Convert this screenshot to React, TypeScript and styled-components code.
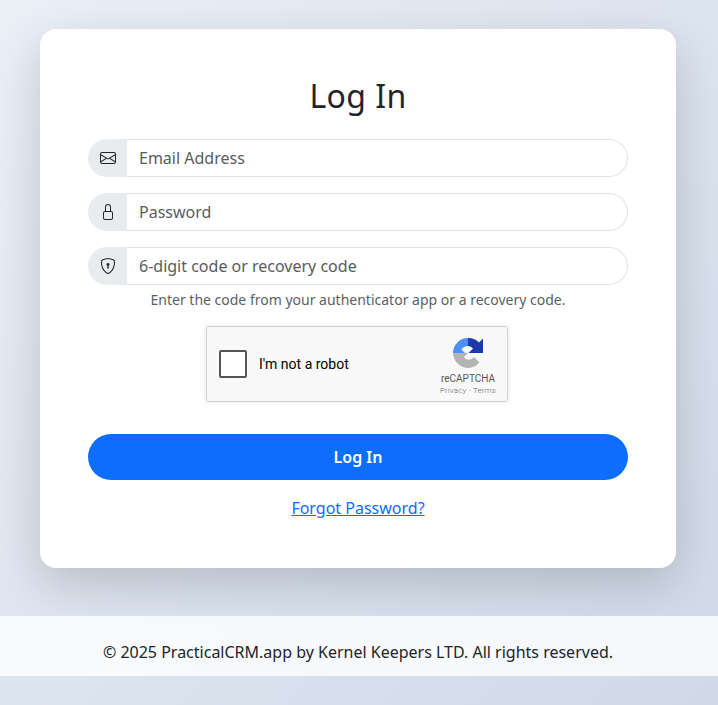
import styled, { createGlobalStyle } from 'styled-components';
import { BsEnvelope, BsLock, BsShieldLock } from 'react-icons/bs';

const GlobalStyle = createGlobalStyle`
  * {
    box-sizing: border-box;
  }

  body {
    margin: 0;
    font-family: 'Noto Sans', sans-serif;
    font-size: 16px;
    line-height: 1.5;
    color: #212529;
  }
`;

/*
 * App Component
 */

const fields = [
  { icon: <BsEnvelope />, placeholder: 'Email Address', type: 'email' },
  { icon: <BsLock />, placeholder: 'Password', type: 'password' },
  { icon: <BsShieldLock />, placeholder: '6-digit code or recovery code', type: 'text' },
];

const RecaptchaLogo = () => (
  <svg width="30" height="30" viewBox="0 0 30 30" aria-hidden="true">
    <path d="M15 0 A15 15 0 0 0 0 15 L12 15 L8.5 11.5 C10 9.5 12 8 15 8 Z" fill="#4a90f5" />
    <path d="M15 0 A15 15 0 0 1 26 4.5 L30 0.5 L30 15 L15.5 15 L20 10.5 C18.5 9 17 8 15 8 Z" fill="#1c3aa9" />
    <path d="M0 15 L15 15 L11 19 C13 22.5 18 22.5 21 19 L26.5 24.5 A15 15 0 0 1 0 15 Z" fill="#b4b4b4" />
  </svg>
);

export default function App() {
  return (
    <Page>
      <GlobalStyle />
      <Main>
        <Card>
          <Title>Log In</Title>
          <Form>
            {fields.map((field) => (
              <InputGroup key={field.placeholder}>
                <Addon>{field.icon}</Addon>
                <Input type={field.type} placeholder={field.placeholder} />
              </InputGroup>
            ))}
          </Form>
          <Help>Enter the code from your authenticator app or a recovery code.</Help>
          <Captcha>
            <CheckBox />
            <CaptchaLabel>I'm not a robot</CaptchaLabel>
            <CaptchaBrand>
              <RecaptchaLogo />
              <BrandName>reCAPTCHA</BrandName>
              <BrandLinks>Privacy - Terms</BrandLinks>
            </CaptchaBrand>
          </Captcha>
          <SubmitButton type="button">Log In</SubmitButton>
          <ForgotLink href="#">Forgot Password?</ForgotLink>
        </Card>
      </Main>
      <Footer>© 2025 PracticalCRM.app by Kernel Keepers LTD. All rights reserved.</Footer>
    </Page>
  );
}

/*
 * Styles
 */

const Page = styled.div`
  min-height: 100vh;
  padding-bottom: 29px;
  display: flex;
  flex-direction: column;
  background: linear-gradient(135deg, #ebf0f7 0%, #cfd9e8 100%);
`;

const Main = styled.main`
  padding: 29px 42px 48px 40px;
`;

const Card = styled.div`
  height: 539px;
  padding: 48px;
  display: flex;
  flex-direction: column;
  align-items: center;
  background-color: #ffffff;
  border-radius: 16px;
  box-shadow: 0 16px 48px rgba(0, 0, 0, 0.175);
`;

const Title = styled.h1`
  margin: 0 0 24px;
  font-size: 32px;
  font-weight: 400;
  letter-spacing: 0.4px;
  line-height: 38px;
  color: #212529;
`;

const Form = styled.div`
  width: 100%;
  display: flex;
  flex-direction: column;
  gap: 16px;
`;

const InputGroup = styled.div`
  display: flex;
  height: 38px;
`;

const Addon = styled.span`
  width: 39px;
  flex-shrink: 0;
  display: flex;
  align-items: center;
  justify-content: center;
  padding-left: 1px;
  font-size: 16px;
  color: #212529;
  background-color: #e9ecef;
  border-radius: 19px 0 0 19px;
`;

const Input = styled.input`
  flex: 1;
  min-width: 0;
  padding: 6px 12px;
  font-family: inherit;
  font-size: 16px;
  color: #212529;
  background-color: #ffffff;
  border: 1px solid #dee2e6;
  border-left: none;
  border-radius: 0 19px 19px 0;
  outline: none;

  &::placeholder {
    color: #595c5f;
    opacity: 1;
  }
`;

const Help = styled.div`
  margin-top: 4px;
  font-size: 14px;
  line-height: 21px;
  color: #5a5f64;
`;

const Captcha = styled.div`
  width: 302px;
  height: 76px;
  margin: 16px 2px 0 0;
  padding: 0 9px 0 12px;
  display: flex;
  align-items: center;
  background-color: #f9f9f9;
  border: 1px solid #d3d3d3;
  border-radius: 3px;
  box-shadow: 0 0 4px 1px rgba(0, 0, 0, 0.08);
  font-family: Roboto, sans-serif;
`;

const CheckBox = styled.div`
  width: 28px;
  height: 28px;
  background-color: #ffffff;
  border: 2px solid #555555;
  border-radius: 2px;
`;

const CaptchaLabel = styled.span`
  margin-left: 12px;
  font-size: 14px;
  color: #000000;
`;

const CaptchaBrand = styled.div`
  margin: 6px 0 0 auto;
  width: 60px;
  display: flex;
  flex-direction: column;
  align-items: center;
  color: #555555;
`;

const BrandName = styled.span`
  margin-top: 4px;
  font-size: 10px;
  line-height: 13px;
`;

const BrandLinks = styled.span`
  font-size: 8px;
  font-weight: 300;
  line-height: 11px;
  letter-spacing: 0.15px;
  white-space: nowrap;
  color: #6b6b6b;
`;

const SubmitButton = styled.button`
  width: 100%;
  height: 46px;
  margin-top: 32px;
  font-family: inherit;
  font-size: 16px;
  font-weight: 600;
  color: #ffffff;
  background-color: #0d6efd;
  border: none;
  border-radius: 23px;
`;

const ForgotLink = styled.a`
  margin-top: 16px;
  color: #0d6efd;
  text-decoration: underline;
`;

const Footer = styled.footer`
  height: 60px;
  padding: 12px 2px 0 0;
  display: flex;
  align-items: center;
  justify-content: center;
  background-color: rgba(255, 255, 255, 0.8);
  color: #212529;
`;
